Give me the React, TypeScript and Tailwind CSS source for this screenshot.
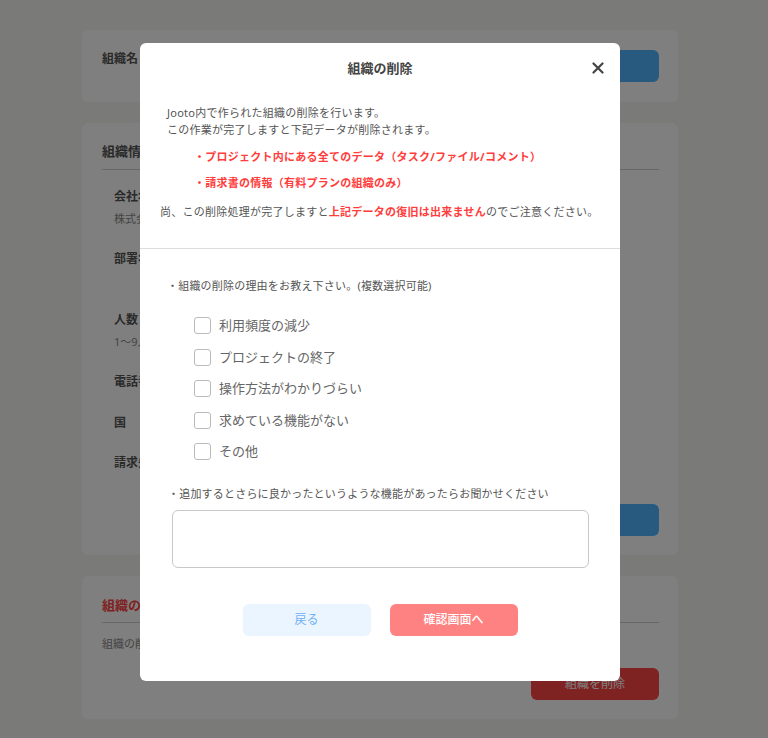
import { useState } from "react";

const reasons = [
  "利用頻度の減少",
  "プロジェクトの終了",
  "操作方法がわかりづらい",
  "求めている機能がない",
  "その他",
];

function Field({ label, value, className }: { label: string; value?: string; className?: string }) {
  return (
    <div className={className}>
      <p className="text-[12px] leading-[18px] font-bold text-[#555]">{label}</p>
      {value !== undefined && <p className="mt-[5px] text-[11px] leading-[16px] text-[#888]">{value}</p>}
    </div>
  );
}

function SettingsPage() {
  return (
    <div className="flex flex-col gap-[21px] pl-[82px] pr-[90px] pt-[30px]">
      <div className="flex h-[72px] items-start justify-between rounded-md bg-white pl-5 pr-[19px] pt-5">
        <p className="text-[12px] leading-[18px] font-bold text-[#555]">組織名</p>
        <button className="h-8 w-[128px] rounded-md bg-[#50b4ff] text-[12px] text-white">編集</button>
      </div>

      <div className="flex h-[432px] flex-col rounded-md bg-white pl-5 pr-[19px] pt-[18px]">
        <h2 className="border-b border-[#ccc] pb-2 text-[13px] leading-[20px] font-bold text-[#555]">組織情報</h2>
        <div className="flex flex-col px-3">
          <Field label="会社名" value="株式会社サンプル" className="mt-[18px]" />
          <Field label="部署名" className="mt-[23px]" />
          <Field label="人数" value="1〜9人" className="mt-[43px]" />
          <Field label="電話番号" className="mt-[23px]" />
          <Field label="国" className="mt-[23px]" />
          <Field label="請求先" className="mt-[22px]" />
        </div>
        <div className="mt-[32px] flex justify-end">
          <button className="h-8 w-[128px] rounded-md bg-[#50b4ff] text-[12px] text-white">編集</button>
        </div>
      </div>

      <div className="flex h-[143px] flex-col rounded-md bg-white pl-5 pr-[19px] pt-[19px]">
        <h2 className="border-b border-[#ccc] pb-[7px] text-[13px] leading-[20px] font-bold text-[#ff4444]">組織の削除</h2>
        <p className="mt-[13px] text-[11px] leading-[16px] text-[#888]">組織の削除を行うと、すべてのデータが削除されます。</p>
        <div className="mt-4 flex justify-end">
          <button className="h-8 w-[128px] rounded-md bg-[#ff4545] text-[12px] text-white">組織を削除</button>
        </div>
      </div>
    </div>
  );
}

function DeleteModal() {
  const [checked, setChecked] = useState<boolean[]>(reasons.map(() => false));
  const [note, setNote] = useState("");

  return (
    <div className="absolute left-[140px] top-[43px] flex h-[638px] w-[480px] flex-col rounded-md bg-white">
      <h1 className="pt-[15px] text-center text-[13px] leading-[20px] font-bold text-[#444]">組織の削除</h1>
      <button className="absolute right-[14px] top-[17px] flex h-4 w-4 items-center justify-center" aria-label="close">
        <svg width="12" height="12" viewBox="0 0 12 12">
          <path d="M1.5 1.5 L10.5 10.5 M10.5 1.5 L1.5 10.5" stroke="#444" strokeWidth="2.2" strokeLinecap="round" />
        </svg>
      </button>

      <div className="h-[171px] border-b border-[#ddd] text-[11px] leading-[17px] tracking-[0.25px] text-[#555]">
        <p className="mt-[26px] pl-[27px]">
          Jooto内で作られた組織の削除を行います。
          <br />
          この作業が完了しますと下記データが削除されます。
        </p>
        <p className="mt-[10px] pl-[54px] font-bold text-[#ff3d3d]">・プロジェクト内にある全てのデータ（タスク/ファイル/コメント）</p>
        <p className="mt-[9px] pl-[54px] font-bold text-[#ff3d3d]">・請求書の情報（有料プランの組織のみ）</p>
        <p className="mt-[12px] pl-[20px]">
          尚、この削除処理が完了しますと<span className="font-bold text-[#ff3d3d]">上記データの復旧は出来ません</span>のでご注意ください。
        </p>
      </div>

      <p className="mt-[29px] pl-[27px] text-[11px] leading-[16px] tracking-[0.2px] text-[#555]">・組織の削除の理由をお教え下さい。(複数選択可能)</p>
      <div className="mt-4 flex flex-col pl-[54px]">
        {reasons.map((r, i) => (
          <label key={r} className="flex h-[31.5px] cursor-pointer items-center gap-[8px]">
            <input
              type="checkbox"
              checked={checked[i]}
              onChange={() => setChecked(checked.map((c, j) => (j === i ? !c : c)))}
              className="h-[17px] w-[17px] appearance-none rounded-[3px] border border-[#bbb] bg-white checked:bg-[#50b4ff]"
            />
            <span className="text-[13px] text-[#666]">{r}</span>
          </label>
        ))}
      </div>

      <p className="mt-[18px] pl-[28px] text-[11px] leading-[16px] tracking-[0.2px] text-[#555]">・追加するとさらに良かったというような機能があったらお聞かせください</p>
      <textarea
        value={note}
        onChange={(e) => setNote(e.target.value)}
        className="ml-[32px] mt-[8px] h-[58px] w-[417px] resize-none rounded-md border border-[#c8c8c8] p-2 text-[12px] outline-none"
      />

      <div className="mt-[36px] flex justify-center gap-[19px]">
        <button className="h-8 w-[128px] rounded-md bg-[#ebf5ff] text-[12px] text-[#6fb0f5]">戻る</button>
        <button className="h-8 w-[128px] rounded-md bg-[#ff8282] text-[12px] font-medium text-white">確認画面へ</button>
      </div>
    </div>
  );
}

export default function App() {
  return (
    <div className="relative h-[738px] w-[768px] overflow-hidden bg-[#f5f4f2] font-['Noto_Sans','Noto_Sans_CJK_JP',sans-serif]">
      <SettingsPage />
      <div className="absolute inset-0 bg-black/50" />
      <DeleteModal />
    </div>
  );
}
